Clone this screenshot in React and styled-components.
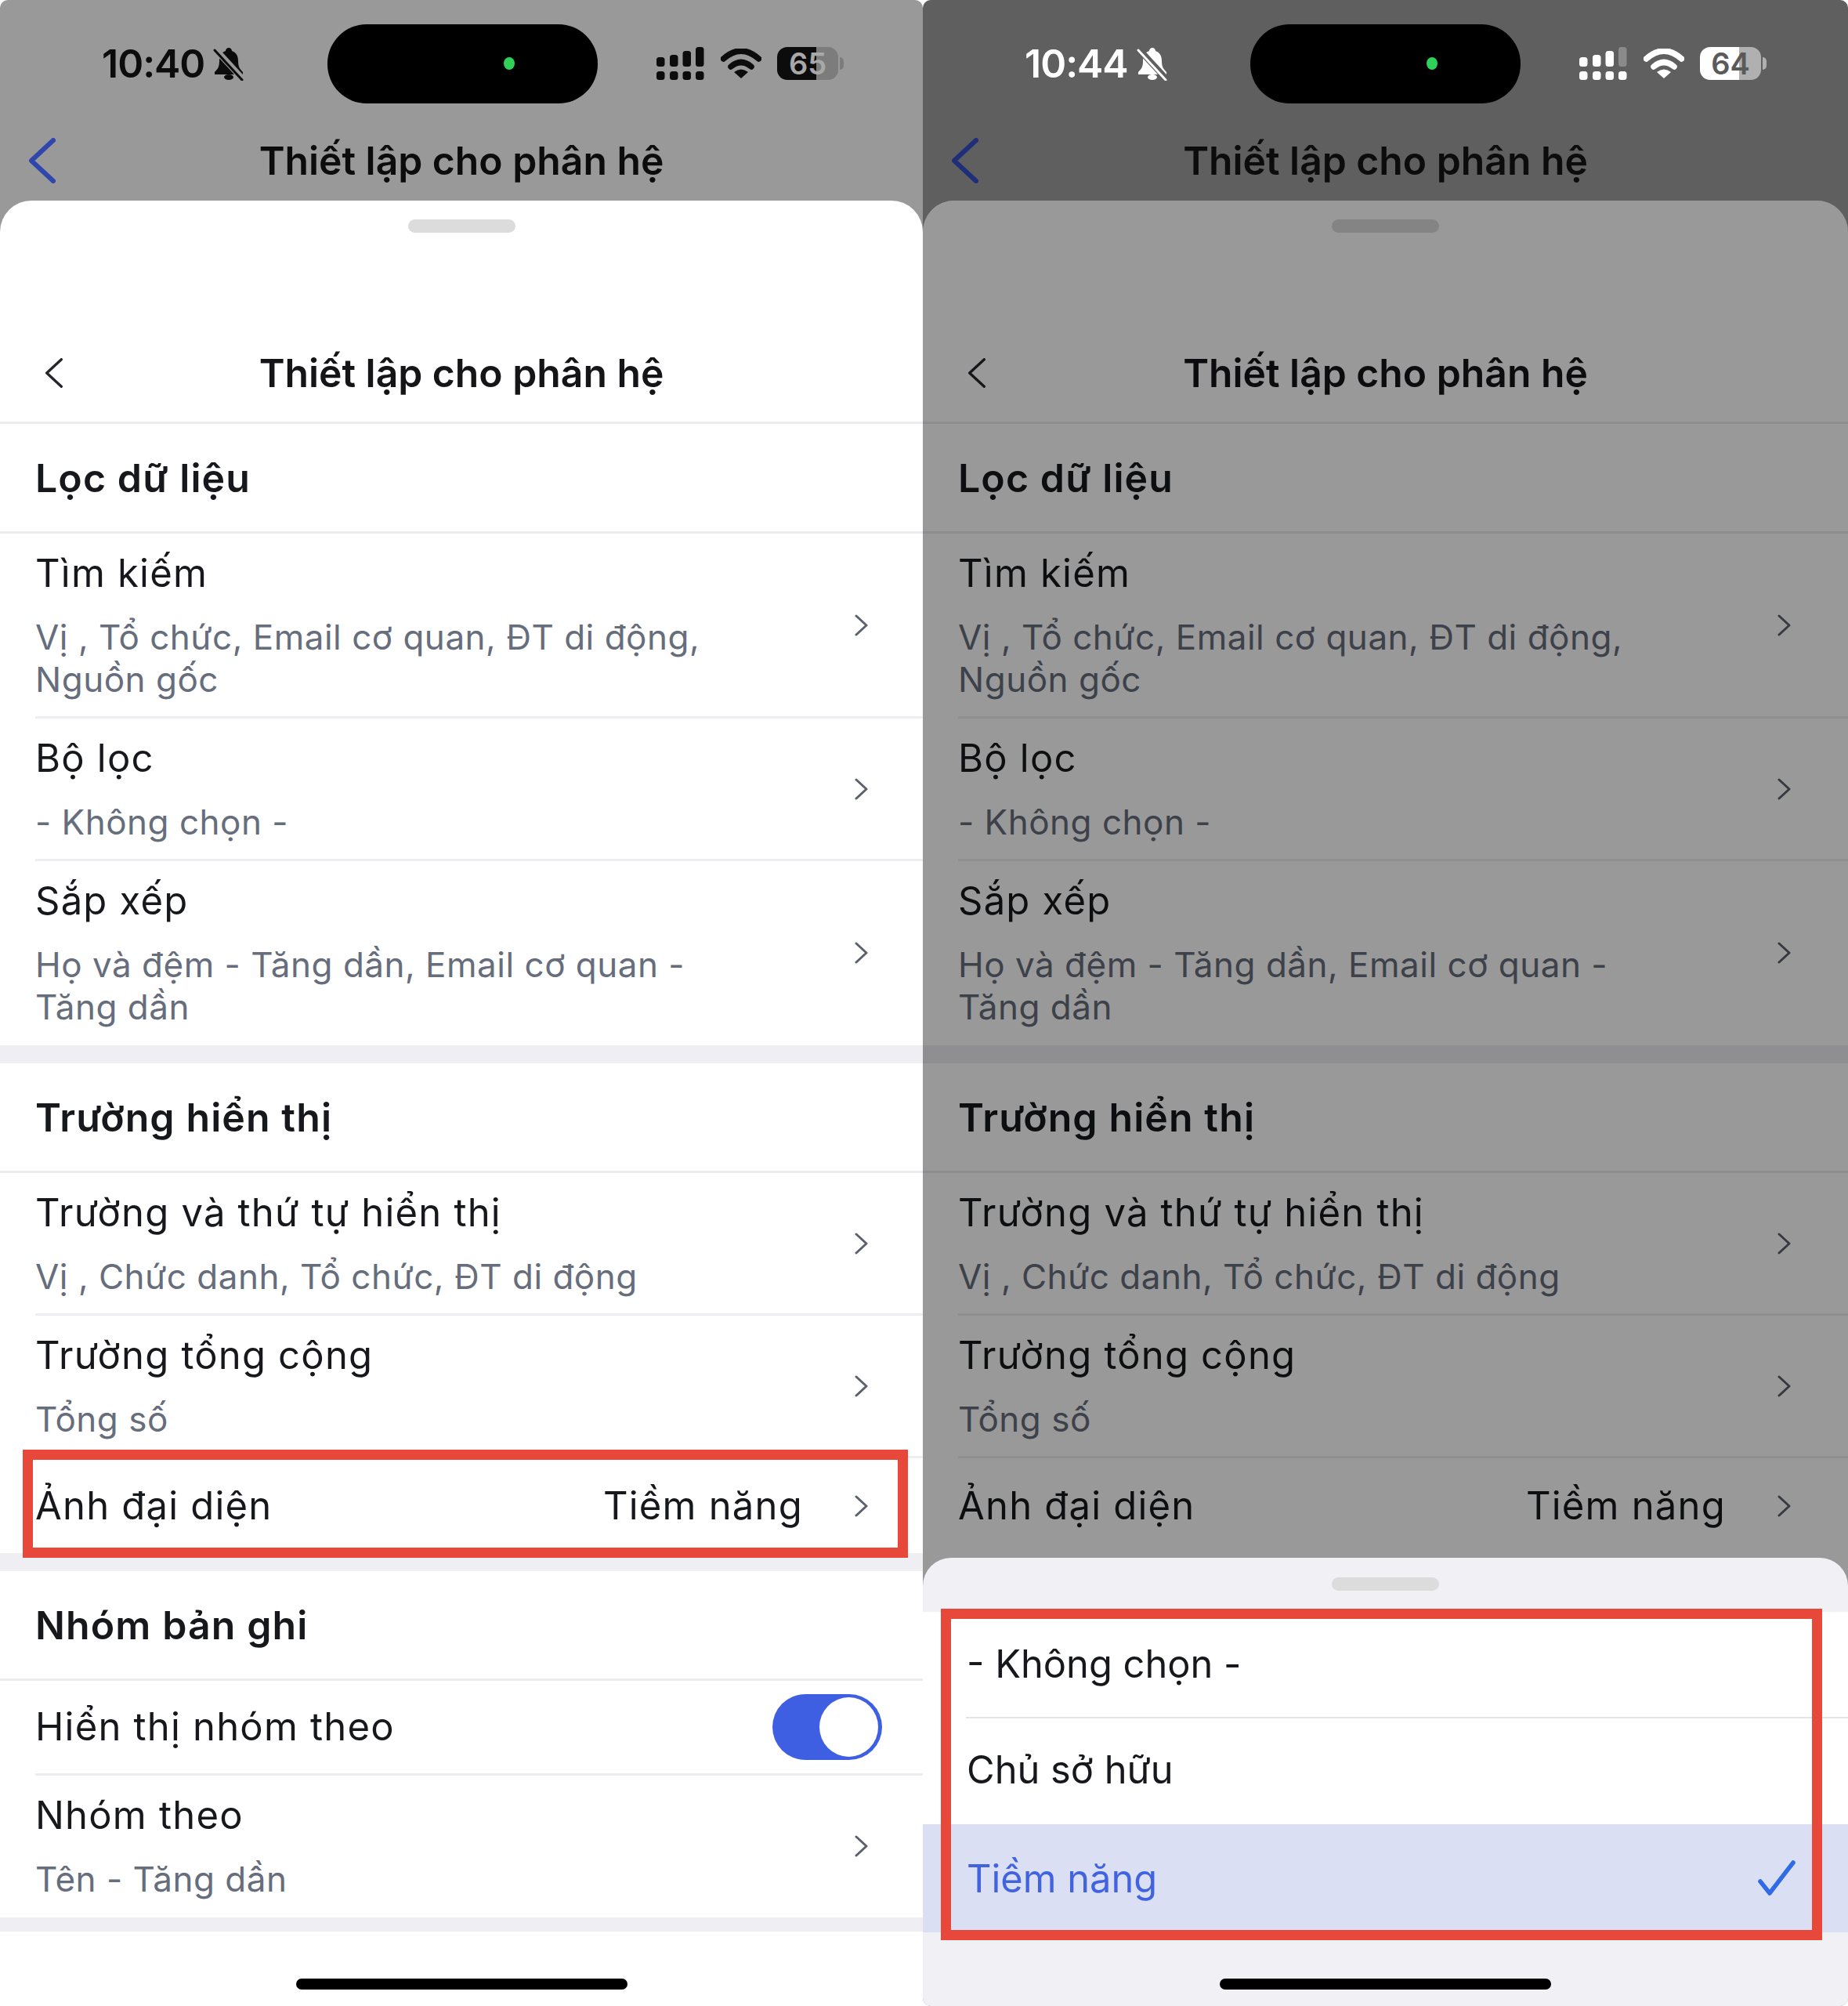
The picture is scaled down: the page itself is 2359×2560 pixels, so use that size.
import React from "react";
import styled, { createGlobalStyle } from "styled-components";

const GlobalStyle = createGlobalStyle`
  html, body { margin: 0; padding: 0; background: #fff; }
  body { font-family: Inter, "Liberation Sans", sans-serif; color: #111; }
  * { box-sizing: border-box; }
`;

const BackIcon = ({ color, width, height, stroke }) => (
  <svg width={width} height={height} viewBox={`0 0 ${width} ${height}`} fill="none">
    <polyline
      points={`${width - stroke / 2},${stroke / 2} ${stroke / 2},${height / 2} ${width - stroke / 2},${height - stroke / 2}`}
      stroke={color}
      strokeWidth={stroke}
      strokeLinecap="round"
      strokeLinejoin="round"
    />
  </svg>
);

const ChevronIcon = () => (
  <svg width="17" height="28" viewBox="0 0 17 28" fill="none">
    <polyline points="2,2 15,14 2,26" stroke="#5a606c" strokeWidth="3" strokeLinecap="round" strokeLinejoin="round" />
  </svg>
);

const CheckIcon = () => (
  <svg width="48" height="46" viewBox="0 0 48 46" fill="none">
    <polyline points="3,27 15,42 45,3" stroke="#2f6be4" strokeWidth="5.5" strokeLinecap="round" strokeLinejoin="round" />
  </svg>
);

const SignalIcon = ({ color, lastBar }) => (
  <svg width="62" height="42" viewBox="0 0 62 42" fill={color}>
    <rect x="0" y="13" width="10.5" height="12" rx="3.5" />
    <rect x="17" y="10" width="10.5" height="15" rx="3.5" />
    <rect x="33.5" y="5" width="10.5" height="20" rx="3.5" />
    <rect x="50" y="0" width="10.5" height="25" rx="3.5" fill={lastBar} />
    <rect x="0" y="31" width="10.5" height="11" rx="3.5" />
    <rect x="17" y="31" width="10.5" height="11" rx="3.5" />
    <rect x="33.5" y="31" width="10.5" height="11" rx="3.5" />
    <rect x="50" y="31" width="10.5" height="11" rx="3.5" />
  </svg>
);

const WifiIcon = ({ color }) => (
  <svg width="52" height="38" viewBox="0 0 52 38" fill="none">
    <path d="M3.5 13 Q26 -7 48.5 13" stroke={color} strokeWidth="7.5" strokeLinecap="round" />
    <path d="M13 23 Q26 12 39 23" stroke={color} strokeWidth="7.5" strokeLinecap="round" />
    <path d="M17 30 Q26 23 35 30 L26 38 Z" fill={color} />
  </svg>
);

const BellOffIcon = ({ color, bg }) => (
  <svg width="40" height="43" viewBox="0 0 40 43">
    <path
      d="M20 1C22.4 1 24 2.8 24 5C30 7 32 12 32 18C32 25 34 28 38 32V35H2V32C6 28 8 25 8 18C8 12 10 7 16 5C16 2.8 17.6 1 20 1Z"
      fill={color}
    />
    <ellipse cx="20" cy="38.5" rx="6" ry="3.5" fill={color} />
    <line x1="3" y1="3" x2="38" y2="41" stroke={bg} strokeWidth="8" />
    <line x1="2" y1="4" x2="37" y2="42" stroke={color} strokeWidth="3" strokeLinecap="round" />
  </svg>
);

const Phone = ({ dim, time, battery, children, wide }) => {
  const top = dim ? "#5f5f5f" : "#999999";
  const fg = dim ? "#ffffff" : "#0c0c0c";
  return (
    <PhoneFrame $wide={wide}>
      <TopArea $bg={top}>
        <StatusBar>
          <TimeGroup>
            <Time $color={fg}>{time}</Time>
            <BellOffIcon color={fg} bg={top} />
          </TimeGroup>
          <Island>
            <CameraDot />
          </Island>
          <StatusIcons>
            <SignalIcon color={fg} lastBar={dim ? "#8a8a8a" : fg} />
            <WifiIcon color={fg} />
            <Battery $dim={dim}>{battery}</Battery>
          </StatusIcons>
        </StatusBar>
        <NavBar>
          <BackIcon color={dim ? "#1f2e78" : "#2f46ac"} width={34} height={58} stroke={6} />
          <NavTitle>Thiết lập cho phân hệ</NavTitle>
        </NavBar>
      </TopArea>
      {children}
    </PhoneFrame>
  );
};

const SettingsSheet = ({ dim, marked }) => (
  <Sheet>
    <Handle />
    <SheetHeader>
      <BackIcon color="#26272b" width={22} height={38} stroke={3.4} />
      <SheetTitle>Thiết lập cho phân hệ</SheetTitle>
    </SheetHeader>

    <SectionHead>Lọc dữ liệu</SectionHead>
    <Row>
      <RowText>
        <Label>Tìm kiếm</Label>
        <Sub>Vị , Tổ chức, Email cơ quan, ĐT di động, Nguồn gốc</Sub>
      </RowText>
      <ChevronIcon />
    </Row>
    <Row>
      <RowText>
        <Label>Bộ lọc</Label>
        <Sub>- Không chọn -</Sub>
      </RowText>
      <ChevronIcon />
    </Row>
    <Row $last>
      <RowText>
        <Label>Sắp xếp</Label>
        <Sub>Họ và đệm - Tăng dần, Email cơ quan - Tăng dần</Sub>
      </RowText>
      <ChevronIcon />
    </Row>

    <SectionGap $h={23} />
    <SectionHead>Trường hiển thị</SectionHead>
    <Row>
      <RowText>
        <Label>Trường và thứ tự hiển thị</Label>
        <Sub>Vị , Chức danh, Tổ chức, ĐT di động</Sub>
      </RowText>
      <ChevronIcon />
    </Row>
    <Row>
      <RowText>
        <Label>Trường tổng cộng</Label>
        <Sub>Tổng số</Sub>
      </RowText>
      <ChevronIcon />
    </Row>
    <SingleRow $last>
      <Label>Ảnh đại diện</Label>
      <ValueGroup>
        <Label>Tiềm năng</Label>
        <ChevronIcon />
      </ValueGroup>
      {marked && <RowMark />}
    </SingleRow>

    {/* on the dimmed phone the picker covers everything below this row */}
    {!dim && (
      <>
        <SectionGap $h={23} />
        <SectionHead>Nhóm bản ghi</SectionHead>
        <SingleRow $toggle>
          <Label>Hiển thị nhóm theo</Label>
          <Toggle>
            <Knob />
          </Toggle>
        </SingleRow>
        <Row $last>
          <RowText>
            <Label>Nhóm theo</Label>
            <Sub>Tên - Tăng dần</Sub>
          </RowText>
          <ChevronIcon />
        </Row>

        <SectionGap $h={18} />
        <Footer>
          <HomeBar />
        </Footer>
      </>
    )}
    {dim && <Dimmer />}
  </Sheet>
);

export default function App() {
  return (
    <>
      <GlobalStyle />
      <Page>
        <Phone time="10:40" battery="65">
          <SettingsSheet marked />
        </Phone>
        <Phone dim wide time="10:44" battery="64">
          <SettingsSheet dim />
          <PickerSheet>
            <PickerHandle />
            <OptionList>
              <Option>- Không chọn -</Option>
              <Option>Chủ sở hữu</Option>
              <Option $selected>
                Tiềm năng
                <CheckIcon />
              </Option>
              <ListMark />
            </OptionList>
            <PickerFooter>
              <HomeBar />
            </PickerFooter>
          </PickerSheet>
        </Phone>
      </Page>
    </>
  );
}

const Page = styled("div")`
  display: flex;
  width: 2359px;
  height: 2560px;
  overflow: hidden;
  background: #fff;
`;

const PhoneFrame = styled("div")`
  --row-end: ${(p) => (p.$wide ? 73 : 70)}px;
  position: relative;
  flex: none;
  width: ${(p) => (p.$wide ? 1181 : 1178)}px;
  height: 2560px;
  border-radius: 10px;
  overflow: hidden;
`;

const TopArea = styled("div")`
  height: 296px;
  margin-bottom: -40px;
  background: ${(p) => p.$bg};
`;

const StatusBar = styled("div")`
  display: grid;
  grid-template-columns: 418px 345px 1fr;
  align-items: center;
  height: 162px;
`;

const TimeGroup = styled("div")`
  display: flex;
  align-items: center;
  gap: 11px;
  padding-left: 130px;
`;

const Time = styled("span")`
  font-size: 50px;
  line-height: 60px;
  font-weight: 600;
  letter-spacing: -1px;
  color: ${(p) => p.$color};
`;

const Island = styled("div")`
  display: flex;
  align-items: center;
  justify-content: flex-end;
  height: 101px;
  padding-right: 106px;
  border-radius: 50px;
  background: #000;
`;

const CameraDot = styled("span")`
  width: 14px;
  height: 16px;
  border-radius: 50%;
  background: #2fd158;
`;

const StatusIcons = styled("div")`
  display: flex;
  align-items: center;
  gap: 20px;
  padding-left: 75px;
`;

const Battery = styled("div")`
  position: relative;
  display: flex;
  align-items: center;
  justify-content: center;
  width: 78px;
  height: 42px;
  border-radius: 13px;
  background: ${(p) =>
    p.$dim
      ? "linear-gradient(90deg, #fff 0 64%, #b0b0b0 64% 100%)"
      : "linear-gradient(90deg, #0c0c0c 0 64%, #7c7c7c 64% 100%)"};
  color: ${(p) => (p.$dim ? "#5a5a5a" : "#a8a8a8")};
  font-size: 38px;
  font-weight: 600;

  &::after {
    content: "";
    position: absolute;
    top: 13px;
    right: -7px;
    width: 5px;
    height: 16px;
    border-radius: 0 5px 5px 0;
    background: ${(p) => (p.$dim ? "#b0b0b0" : "#7c7c7c")};
  }
`;

const NavBar = styled("div")`
  display: grid;
  grid-template-columns: 1fr auto 1fr;
  align-items: center;
  height: 86px;

  & > svg {
    margin-left: 37px;
  }
`;

const NavTitle = styled("h1")`
  margin: 0;
  font-size: 49.8px;
  line-height: 60px;
  font-weight: 600;
  color: #0c0c0c;
`;

const Sheet = styled("div")`
  position: relative;
  overflow: hidden;
  height: 2304px;
  padding-top: 24px;
  border-radius: 40px 40px 0 0;
  background: #fff;
`;

const Handle = styled("div")`
  width: 137px;
  height: 17px;
  margin: 0 auto;
  border-radius: 9px;
  background: #dcdcdc;
`;

const SheetHeader = styled("div")`
  display: grid;
  grid-template-columns: 1fr auto 1fr;
  align-items: center;
  padding: 149px 0 32px;
  border-bottom: 3px solid #ebebf0;

  & > svg {
    margin-left: 58px;
  }
`;

const SheetTitle = styled(NavTitle)`
  color: #151518;
`;

const SectionHead = styled("h2")`
  display: flex;
  align-items: center;
  height: 140px;
  margin: 0;
  padding-left: 45px;
  border-bottom: 3px solid #ebebf0;
  font-size: 50px;
  letter-spacing: 1.1px;
  font-weight: 600;
  color: #17181c;
`;

const SectionGap = styled("div")`
  height: ${(p) => p.$h}px;
  background: #eeeef3;
`;

const Row = styled("div")`
  position: relative;
  display: flex;
  align-items: center;
  justify-content: space-between;
  margin-left: 45px;
  padding: 21px var(--row-end) ${(p) => (p.$last ? 22 : 20)}px 0;
  border-bottom: ${(p) => (p.$last ? "none" : "3px solid #eeeef2")};
`;

const SingleRow = styled(Row)`
  height: 121px;
  padding-top: 0;
  padding-bottom: 0;
  padding-right: ${(p) => (p.$toggle ? "52px" : "var(--row-end)")};
`;

const RowText = styled("div")`
  max-width: 860px;
`;

const Label = styled("div")`
  font-size: 49px;
  line-height: 60px;
  letter-spacing: 1.2px;
  color: #17181c;
`;

const Sub = styled("div")`
  margin-top: 24px;
  font-size: 44px;
  line-height: 54px;
  letter-spacing: 0.5px;
  color: #666d7c;
`;

const ValueGroup = styled("div")`
  display: flex;
  align-items: center;
  gap: 66px;
`;

const RowMark = styled("div")`
  position: absolute;
  top: -11px;
  right: 19px;
  bottom: -6px;
  left: -16px;
  border: 13px solid #e8483a;
`;

const Toggle = styled("div")`
  display: flex;
  justify-content: flex-end;
  align-items: center;
  width: 140px;
  height: 84px;
  padding-right: 5px;
  border-radius: 42px;
  background: #3f5fe3;
`;

const Knob = styled("span")`
  width: 75px;
  height: 76px;
  border-radius: 50%;
  background: #fff;
`;

const Footer = styled("div")`
  display: flex;
  justify-content: center;
  padding-top: 60px;
`;

const HomeBar = styled("div")`
  width: 423px;
  height: 14px;
  border-radius: 7px;
  background: #000;
`;

const Dimmer = styled("div")`
  position: absolute;
  inset: 0;
  background: rgba(0, 0, 0, 0.4);
`;

const PickerSheet = styled("div")`
  position: absolute;
  top: 1988px;
  right: 0;
  bottom: 0;
  left: 0;
  padding-top: 25px;
  border-radius: 36px 36px 0 0;
  background: #f0f0f5;
`;

const PickerHandle = styled(Handle)`
  margin-bottom: 27px;
`;

const OptionList = styled("div")`
  position: relative;
  background: #fff;
`;

const Option = styled("div")`
  position: relative;
  display: flex;
  align-items: center;
  justify-content: space-between;
  height: ${(p) => (p.$selected ? 138 : 135.5)}px;
  padding: 0 67px ${(p) => (p.$selected ? 0 : 3)}px 56px;
  font-size: 48.8px;
  color: ${(p) => (p.$selected ? "#4263e0" : "#17181c")};
  background: ${(p) => (p.$selected ? "#dadff3" : "transparent")};

  &:first-child::after {
    content: "";
    position: absolute;
    right: 0;
    bottom: 0;
    left: 55px;
    height: 2px;
    background: #e4e4ea;
  }
`;

const ListMark = styled("div")`
  position: absolute;
  top: -4px;
  right: 33px;
  bottom: -10px;
  left: 23px;
  border: 13px solid #e8483a;
`;

const PickerFooter = styled("div")`
  display: flex;
  justify-content: center;
  padding-top: 59px;
`;
